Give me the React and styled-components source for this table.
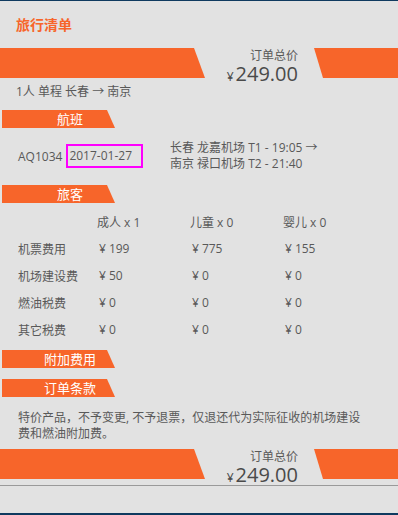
import React from 'react';
import styled, {createGlobalStyle} from 'styled-components';

const ORANGE = '#f7652a';
const TEXT = '#595959';

// Глобальные стили страницы
const GlobalStyle = createGlobalStyle`
  body {
    margin: 0;
    background: #e2e2e2;
    font-family: "Open Sans", "Noto Sans CJK SC", sans-serif;
    color: ${TEXT};
  }
`;

// Обертка страницы
const Page = styled.div`
  width: 398px;
  background: #e2e2e2;
  border-top: 1px solid #0f3a5f;
`;

// Заголовок
const PageTitle = styled.h1`
  margin: 14px 0 0;
  padding-left: 16px;
  font-size: 14px;
  line-height: 20px;
  font-weight: 700;
  color: ${ORANGE};
`;

// Полоса с итоговой ценой
const PriceBanner = styled.div`
  display: flex;
  height: 30px;
  margin-top: ${p => p.$top}px;
`;

const BannerLeft = styled.div`
  flex: 0 0 205px;
  background: ${ORANGE};
  clip-path: polygon(0 0, 194px 0, 100% 100%, 0 100%);
`;

const BannerRight = styled.div`
  flex: 0 0 84px;
  background: ${ORANGE};
  clip-path: polygon(0 0, 100% 0, 100% 100%, 9px 100%);
`;

const BannerPrice = styled.div`
  flex: 1;
  padding-right: 16px;
  text-align: right;
  white-space: nowrap;
`;

const PriceLabel = styled.div`
  margin-top: 1px;
  font-size: 12px;
  line-height: 14px;
`;

const PriceAmount = styled.div`
  font-size: 20px;
  line-height: 21px;
  color: #4a4a4a;

  span {
    font-size: 12px;
    margin-right: 2px;
  }
`;

// Строка маршрута
const RouteLine = styled.div`
  margin-top: 6px;
  padding-left: 16px;
  font-size: 12px;
  line-height: 16px;
`;

// Ярлык раздела
const SectionTag = styled.div`
  width: 113px;
  height: 18px;
  margin: ${p => p.$top}px 0 0 2px;
  padding-left: 23px;
  box-sizing: border-box;
  background: ${ORANGE};
  clip-path: polygon(0 0, 105px 0, 100% 100%, 0 100%);
  color: #fff;
  font-size: 13px;
  line-height: 18px;
  text-align: center;
`;

// Рейс
const FlightRow = styled.div`
  display: flex;
  align-items: center;
  height: 32px;
  margin-top: 12px;
  font-size: 12px;
`;

const FlightCode = styled.div`
  flex: 0 0 170px;
  display: flex;
  align-items: center;
  padding-left: 18px;
  box-sizing: border-box;
`;

const DateBox = styled.span`
  display: inline-block;
  width: 77px;
  height: 24px;
  margin-left: 4px;
  padding-left: 1px;
  box-sizing: border-box;
  border: 2px solid #ff00ff;
  line-height: 20px;
`;

const FlightRoute = styled.div`
  line-height: 16px;
`;

// Таблица стоимости
const FareTable = styled.div`
  display: grid;
  grid-template-columns: 79px 93px 93px 1fr;
  grid-auto-rows: 27px;
  align-items: center;
  margin-top: 5px;
  padding-left: 18px;
  font-size: 12px;
`;

const Cell = styled.div`
  padding-left: ${p => (p.$money ? 2 : 0)}px;
`;

const Yen = styled.span`
  margin-right: 3px;
`;

// Условия заказа
const Terms = styled.p`
  margin: 13px 0 0;
  padding: 0 30px 0 18px;
  font-size: 12px;
  line-height: 16px;
`;

// Нижняя панель
const Footer = styled.div`
  height: 27px;
  margin-top: 6px;
  border-top: 1px solid #9a9a9a;
  border-bottom: 2px solid #0f3a5f;
`;

const passengers = ['成人 x 1', '儿童 x 0', '婴儿 x 0'];

const fares = [
  {name: '机票费用', values: [199, 775, 155]},
  {name: '机场建设费', values: [50, 0, 0]},
  {name: '燃油税费', values: [0, 0, 0]},
  {name: '其它税费', values: [0, 0, 0]},
];

function Banner({top}) {
  return (
    <PriceBanner $top={top}>
      <BannerLeft />
      <BannerPrice>
        <PriceLabel>订单总价</PriceLabel>
        <PriceAmount><span>¥</span>249.00</PriceAmount>
      </BannerPrice>
      <BannerRight />
    </PriceBanner>
  );
}

export default function App() {
  return (
    <Page>
      <GlobalStyle />
      <PageTitle>旅行清单</PageTitle>
      <Banner top={13} />
      <RouteLine>1人 单程 长春 → 南京</RouteLine>

      <SectionTag $top={10}>航班</SectionTag>
      <FlightRow>
        <FlightCode>
          AQ1034
          <DateBox>2017-01-27</DateBox>
        </FlightCode>
        <FlightRoute>
          <div>长春 龙嘉机场 T1 - 19:05 →</div>
          <div>南京 禄口机场 T2 - 21:40</div>
        </FlightRoute>
      </FlightRow>

      <SectionTag $top={13}>旅客</SectionTag>
      <FareTable>
        <Cell />
        {passengers.map(p => <Cell key={p}>{p}</Cell>)}
        {fares.map(row => (
          <React.Fragment key={row.name}>
            <Cell>{row.name}</Cell>
            {row.values.map((v, i) => <Cell $money key={i}><Yen>¥</Yen>{v}</Cell>)}
          </React.Fragment>
        ))}
      </FareTable>

      <SectionTag $top={7}>附加费用</SectionTag>
      <SectionTag $top={11}>订单条款</SectionTag>
      <Terms>特价产品，不予变更, 不予退票，仅退还代为实际征收的机场建设费和燃油附加费。</Terms>

      <Banner top={7} />
      <Footer />
    </Page>
  );
}
